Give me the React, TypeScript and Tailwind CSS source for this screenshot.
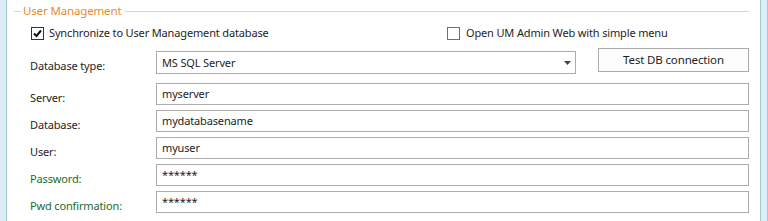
import React from "react";

const font = { fontFamily: '"Segoe UI", "Noto Sans", sans-serif' };

function Field({ label, value, green }: { label: string; value: string; green?: boolean }) {
  return (
    <div className="flex h-[27px] items-start">
      <div className={`w-[149px] shrink-0 whitespace-nowrap pt-[7px] pl-[23px] text-[11px] leading-[16px] ${green ? "text-[#1d6b2b]" : "text-[#1e1e1e]"}`}>
        {label}
      </div>
      <div className="h-[22px] flex-1 border border-[#acacac] bg-white pl-[5px] text-[11px] leading-[19px] text-[#1e1e1e]">
        {value}
      </div>
    </div>
  );
}

export default function App() {
  return (
    <div className="flex h-[221px] w-[768px] bg-white text-[11px] tracking-[-0.15px] text-[#1e1e1e]" style={font}>
      <div className="w-[7px] border-r border-[#a9c6d6] bg-[#dcedf6]" />
      <div className="flex flex-1 flex-col pr-[11px]">
        <div className="flex h-[22px] items-center">
          <div className="ml-[7px] h-px w-[7px] bg-[#d5d5d5]" />
          <span className="mx-[2px] text-[11.5px] leading-[16px] text-[#ec8a1f]">User Management</span>
          <div className="ml-[2px] h-px flex-1 bg-[#d5d5d5]" />
        </div>
        <div className="flex h-[22px] items-center">
          <div className="ml-[24px] flex h-[13px] w-[13px] shrink-0 items-center justify-center border border-[#333333] bg-white">
            <svg width="9" height="9" viewBox="0 0 9 9">
              <path d="M1 4.5 L3.5 7 L8 1.5" fill="none" stroke="#111" strokeWidth="2" />
            </svg>
          </div>
          <span className="ml-[5px] w-[398px] shrink-0 whitespace-nowrap leading-[16px]">Synchronize to User Management database</span>
          <div className="h-[13px] w-[13px] shrink-0 border border-[#707070] bg-white" />
          <span className="ml-[6px] whitespace-nowrap leading-[16px]">Open UM Admin Web with simple menu</span>
        </div>
        <div className="flex h-[39px] items-start">
          <div className="w-[149px] shrink-0 whitespace-nowrap pl-[23px] pt-[14px] leading-[16px]">
            Database type:
          </div>
          <div className="mt-[7px] flex h-[23px] w-[420px] shrink-0 items-center justify-between border border-[#acacac] bg-white pl-[5px] pr-[4px]">
            <span className="leading-[16px]">MS SQL Server</span>
            <svg width="7" height="4" viewBox="0 0 7 4">
              <path d="M0 0 H7 L3.5 4 Z" fill="#444" />
            </svg>
          </div>
          <div className="ml-[22px] mt-[4px] flex h-[24px] flex-1 items-center justify-center border border-[#acacac] bg-[#fdfdfd] text-[11.5px] leading-[16px]">
            Test DB connection
          </div>
        </div>
        <Field label="Server:" value="myserver" />
        <Field label="Database:" value="mydatabasename" />
        <Field label="User:" value="myuser" />
        <Field label="Password:" value="******" green />
        <Field label="Pwd confirmation:" value="******" green />
      </div>
      <div className="w-[8px] border-l border-r border-[#a9c6d6] bg-[#dcedf6]" />
    </div>
  );
}
